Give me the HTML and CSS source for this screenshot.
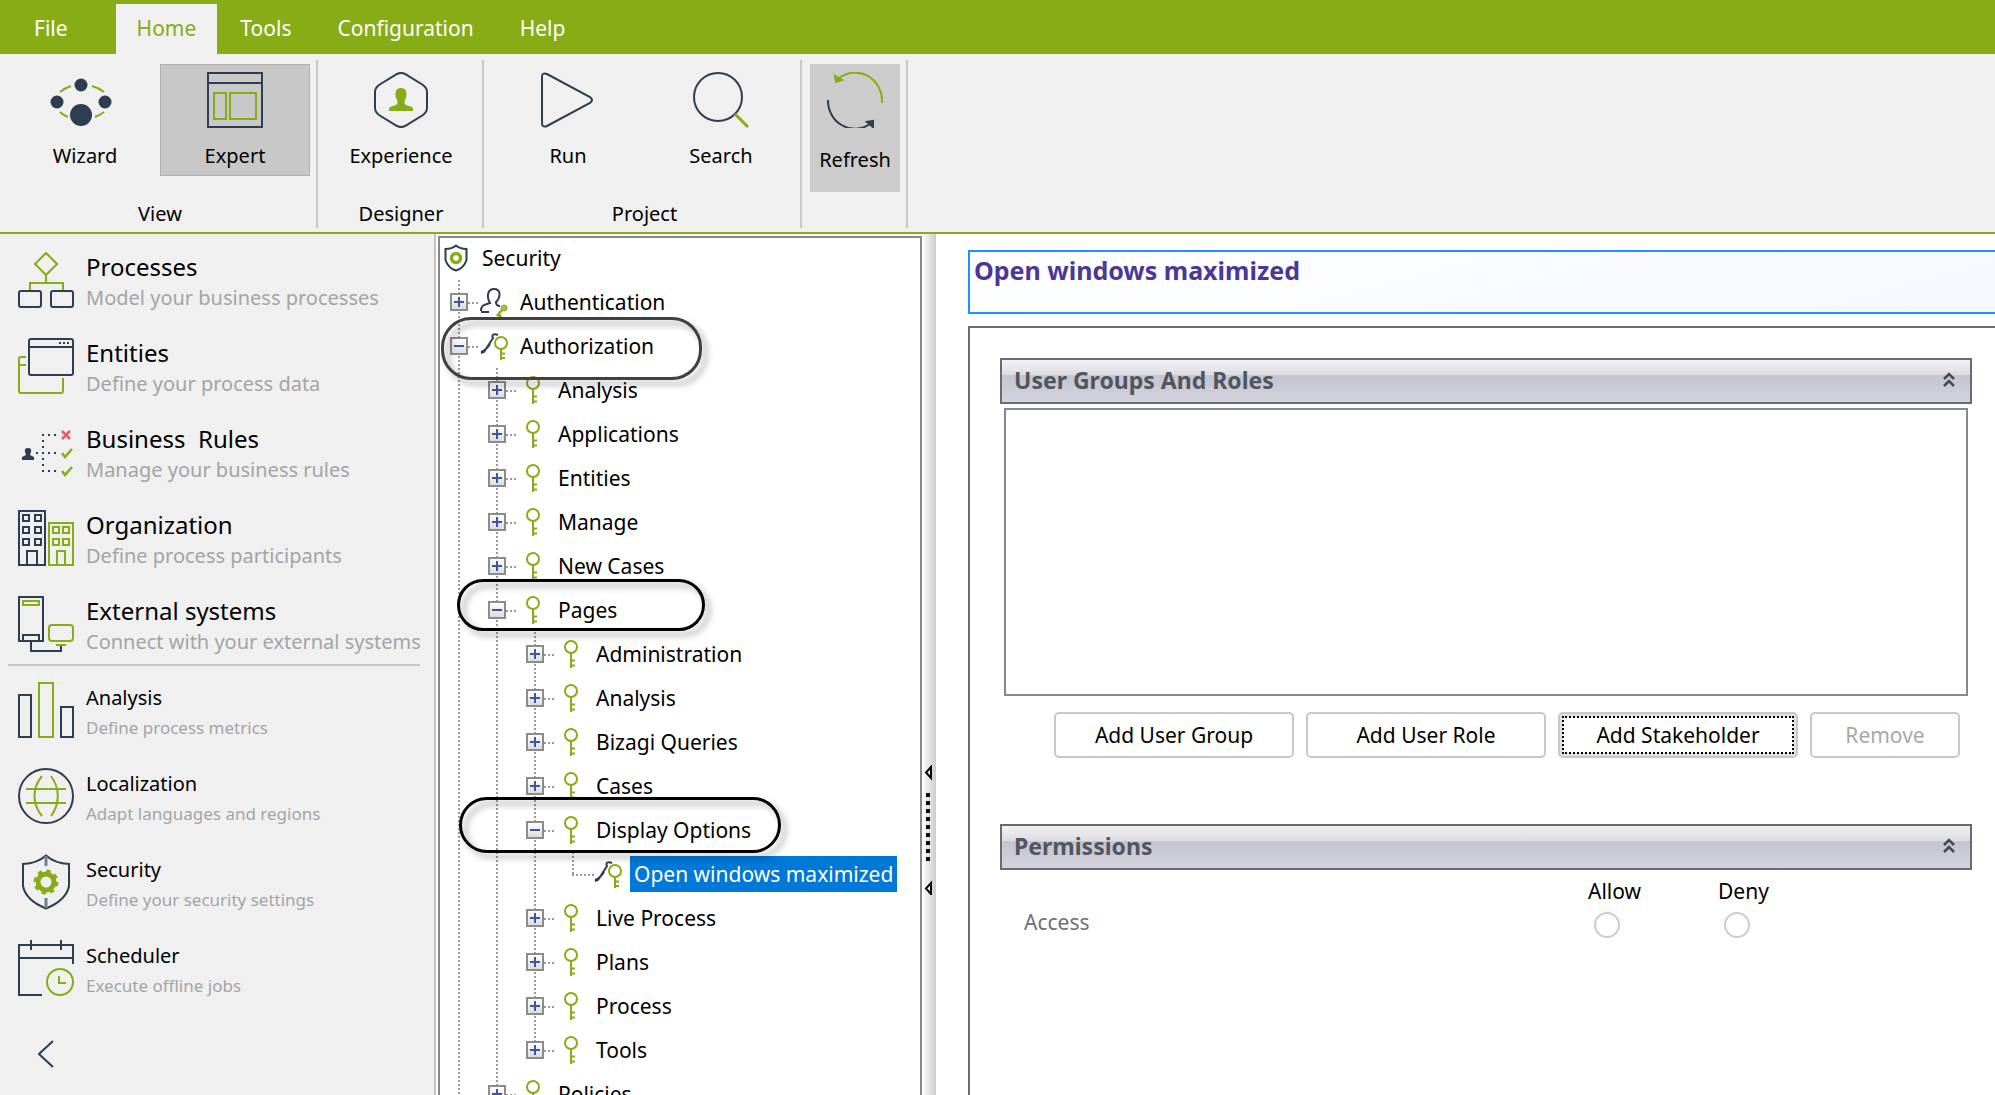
FILE: index.html
```html
<!DOCTYPE html>
<html lang="en">
<head>
<meta charset="utf-8">
<title>Security - Open windows maximized</title>
<link rel="stylesheet" href="styles.css">
</head>
<body>
<svg class="defs" aria-hidden="true">
  <symbol id="key" viewBox="0 0 28 28"><g fill="none" stroke="#87ac16" stroke-width="2"><circle cx="15" cy="7" r="6"/><path d="M15 13v15M16 20.500h3M16 25.500h3"/></g></symbol>
  <symbol id="keys" viewBox="0 0 28 28"><path d="M1 21L4 20L13 6C11 3 14 1 18 3M1 20C4 19 7 17 10 12" fill="none" stroke="#2c3e50" stroke-width="2"/><g fill="none" stroke="#87ac16" stroke-width="2"><circle cx="21" cy="11" r="6"/><path d="M21 17v11M22 21.500h3M22 26h3"/></g></symbol>
  <symbol id="shield" viewBox="0 0 56 56"><path d="M28 1.500C22 7 14 9.500 5 10V32C7 43 17 50 28 54.500C39 50 49 43 51 32V10C42 9.500 34 7 28 1.500Z" fill="none" stroke="#2c3e50" stroke-width="2"/><path d="M28 2v10M28 44v10" stroke="#75808c" stroke-width="3"/><circle cx="28" cy="28" r="8" fill="none" stroke="#87ac16" stroke-width="5"/><circle cx="28" cy="28" r="11" fill="none" stroke="#87ac16" stroke-width="3" stroke-dasharray="4.320 4.320"/></symbol>
</svg>

<header>
  <nav class="tabs">
    <a href="#" class="file">File</a>
    <a href="#" class="active">Home</a>
    <a href="#">Tools</a>
    <a href="#">Configuration</a>
    <a href="#">Help</a>
  </nav>
  <div class="ribbon">
    <section class="group view">
      <div class="tools">
        <button class="tool" type="button">
          <svg viewBox="0 0 70 56" width="70" height="56"><path d="M10 20Q15 16 21 14M42 14Q49 16 54 20M10 40Q13 43 18 45M45 45Q50 43 54 40" fill="none" stroke="#87ac16" stroke-width="2"/><g fill="#2c3e50"><circle cx="31" cy="13" r="6.500"/><circle cx="7" cy="30" r="6.500"/><circle cx="55" cy="30" r="6.500"/><circle cx="31" cy="43" r="11"/></g></svg>
          <span>Wizard</span>
        </button>
        <button class="tool selected" type="button">
          <svg viewBox="0 0 56 56" width="56" height="56" fill="none" stroke-width="2"><path d="M1 1h54v54H1zM1 11h54" stroke="#2c3e50"/><path d="M7 21h12v26H7zM23 21h26v26H23z" stroke="#87ac16"/></svg>
          <span>Expert</span>
        </button>
      </div>
      <h2>View</h2>
    </section>
    <section class="group designer">
      <div class="tools">
        <button class="tool" type="button">
          <svg viewBox="0 0 56 56" width="56" height="56"><path d="M24 2Q28 0 32 2L50 13Q54 16 54 20V36Q54 40 50 43L32 54Q28 56 24 54L6 43Q2 40 2 36V20Q2 16 6 13Z" fill="none" stroke="#2c3e50" stroke-width="2"/><path d="M28 16C34 16 34 22 33 26C31 29 31 32 33 33L39 35Q41 37 40 39H16Q15 37 17 35L23 33C25 32 25 29 23 26C22 22 22 16 28 16Z" fill="#87ac16"/></svg>
          <span>Experience</span>
        </button>
      </div>
      <h2>Designer</h2>
    </section>
    <section class="group project">
      <div class="tools">
        <button class="tool" type="button">
          <svg viewBox="0 0 56 56" width="56" height="56"><path d="M2 5Q2 0 7 2L50 25Q54 28 50 31L7 54Q2 56 2 51Z" fill="none" stroke="#2c3e50" stroke-width="2"/></svg>
          <span>Run</span>
        </button>
        <button class="tool" type="button">
          <svg viewBox="0 0 56 56" width="56" height="56" fill="none" stroke-width="2"><circle cx="25" cy="25" r="24" stroke="#2c3e50"/><path d="M42 42L55 55" stroke="#87ac16" stroke-width="3"/></svg>
          <span>Search</span>
        </button>
      </div>
      <h2>Project</h2>
    </section>
    <section class="group refresh">
      <button class="tool wide" type="button">
        <svg viewBox="0 0 56 56" width="56" height="56" fill="none" stroke-width="2"><g stroke="#87ac16"><path d="M55 31A27 28 0 0 0 11 7"/><path d="M8 4L9 10L15 8Z" fill="#87ac16"/></g><g stroke="#2c3e50"><path d="M1 28A27 28 0 0 0 43 52"/><path d="M46 55L46 49L40 50Z" fill="#2c3e50"/></g></svg>
        <span>Refresh</span>
      </button>
    </section>
  </div>
</header>

<div class="workspace">
  <aside class="sidebar">
    <nav>
      <a href="#" class="module">
        <svg viewBox="0 0 56 56" width="56" height="56" fill="none" stroke-width="2"><path d="M28 1L39 12L28 23L17 12ZM28 23v8M12 38v-7h33v7" stroke="#87ac16"/><g stroke="#2c3e50"><rect x="1" y="39" width="22" height="16" rx="2"/><rect x="33" y="39" width="22" height="16" rx="2"/></g></svg>
        <span class="text"><span class="name">Processes</span><span class="hint">Model your business processes</span></span>
      </a>
      <a href="#" class="module">
        <svg viewBox="0 0 56 56" width="56" height="56" fill="none" stroke-width="2"><g stroke="#87ac16"><path d="M8 19H3Q1 19 1 21V53Q1 55 3 55H43Q45 55 45 53V40M1 27h7"/></g><g stroke="#2c3e50"><rect x="11" y="1" width="44" height="36" rx="2"/><path d="M11 9h44M41 5h2M45 5h2M49 5h2"/></g></svg>
        <span class="text"><span class="name">Entities</span><span class="hint">Define your process data</span></span>
      </a>
      <a href="#" class="module">
        <svg viewBox="0 0 56 56" width="56" height="56" fill="none" stroke-width="2"><g stroke="#2c3e50" stroke-dasharray="2 4"><path d="M24 11h16M24 29h16M24 47h16M25 10v38M18 29h6"/></g><path d="M10 24Q14 24 13 28L12 31L16 33V36H4V33L8 31L7 28Q6 24 10 24Z" fill="#2c3e50"/><path d="M44 7l8 8M52 7l-8 8" stroke="#e85a6a" stroke-width="2.500"/><path d="M44 29l3 4l7-8M44 47l3 4l7-8" stroke="#87ac16" stroke-width="2.500"/></svg>
        <span class="text"><span class="name">Business&nbsp; Rules</span><span class="hint">Manage your business rules</span></span>
      </a>
      <a href="#" class="module">
        <svg viewBox="0 0 56 56" width="56" height="56" fill="none" stroke-width="2"><path d="M1 1h26v54H1zM5 5h6v6H5zM17 5h6v6h-6zM5 17h6v6H5zM17 17h6v6h-6zM5 29h6v6H5zM17 29h6v6h-6zM9 55V41h10v14" stroke="#2c3e50"/><path d="M31 13h24v42H31zM35 17h6v6h-6zM45 17h6v6h-6zM35 29h6v6h-6zM45 29h6v6h-6zM39 55V41h8v14" stroke="#87ac16"/></svg>
        <span class="text"><span class="name">Organization</span><span class="hint">Define process participants</span></span>
      </a>
      <a href="#" class="module">
        <svg viewBox="0 0 56 56" width="56" height="56" fill="none" stroke-width="2"><path d="M1 1h24v44H1zM5 45v-6h16v6M13 45v10h30v-6" stroke="#2c3e50"/><g stroke="#87ac16"><path d="M5 5h16v4H5zM38 49h10"/><rect x="31" y="29" width="24" height="16" rx="3"/></g></svg>
        <span class="text"><span class="name">External systems</span><span class="hint">Connect with your external systems</span></span>
      </a>
    </nav>
    <hr>
    <nav class="minor">
      <a href="#" class="module">
        <svg viewBox="0 0 56 56" width="56" height="56" fill="none" stroke-width="2"><path d="M1 13h12v42H1zM43 25h12v30H43z" stroke="#2c3e50"/><path d="M21 1h14v54H21z" stroke="#87ac16"/></svg>
        <span class="text"><span class="name">Analysis</span><span class="hint">Define process metrics</span></span>
      </a>
      <a href="#" class="module">
        <svg viewBox="0 0 56 56" width="56" height="56" fill="none" stroke-width="2"><circle cx="28" cy="28" r="27" stroke="#2c3e50"/><path d="M8 21h40M8 35h40M24 8C14 20 14 36 24 48M33 8C42 20 42 36 33 48" stroke="#87ac16"/></svg>
        <span class="text"><span class="name">Localization</span><span class="hint">Adapt languages and regions</span></span>
      </a>
      <a href="#" class="module">
        <svg width="56" height="56"><use href="#shield"/></svg>
        <span class="text"><span class="name">Security</span><span class="hint">Define your security settings</span></span>
      </a>
      <a href="#" class="module">
        <svg viewBox="0 0 56 56" width="56" height="56" fill="none" stroke-width="2"><path d="M24 55H1V5H55V24M1 18h54M13 0v10M43 0v10" stroke="#2c3e50"/><g stroke="#87ac16"><circle cx="42" cy="42" r="13"/><path d="M41 36v7h7"/></g></svg>
        <span class="text"><span class="name">Scheduler</span><span class="hint">Execute offline jobs</span></span>
      </a>
    </nav>
    <button class="collapse" type="button" aria-label="Collapse"><svg viewBox="0 0 16 28" width="16" height="28"><path d="M15 1L1 14L15 27" fill="none" stroke="#2c3e50" stroke-width="2"/></svg></button>
  </aside>

  <div class="tree">
    <div class="row root"><svg viewBox="0 0 24 28" width="24" height="28" fill="none"><path d="M12 1.500C9 4 5 5 1.500 5V16C3 21 7 25 12 26.500C17 25 21 21 22.500 16V5C19 5 15 4 12 1.500Z" stroke="#2c3e50" stroke-width="2"/><circle cx="12" cy="14" r="4.500" stroke="#87ac16" stroke-width="3.500"/></svg><span class="label">Security</span></div>
    <ul class="open">
      <li><div class="row"><button class="toggle plus" type="button" aria-label="Expand"></button><svg viewBox="0 0 28 28" width="28" height="28"><path d="M1 24h8M1 23C1 17 4 17 10 15C6 8 8 1 14 1C21 1 21 9 16 14C16 17 18 18 20 18" fill="none" stroke="#2c3e50" stroke-width="2"/><circle cx="24" cy="20" r="3" fill="#a3c244" stroke="#87ac16"/><path d="M22 22L17 28M19 27l2 2" stroke="#87ac16" stroke-width="2.500"/></svg><span class="label">Authentication</span></div></li>
      <li><div class="row"><button class="toggle" type="button" aria-label="Collapse"></button><svg width="28" height="28"><use href="#keys"/></svg><span class="label">Authorization</span></div>
        <ul class="open">
          <li><div class="row"><button class="toggle plus" type="button" aria-label="Expand"></button><svg width="28" height="28"><use href="#key"/></svg><span class="label">Analysis</span></div></li>
          <li><div class="row"><button class="toggle plus" type="button" aria-label="Expand"></button><svg width="28" height="28"><use href="#key"/></svg><span class="label">Applications</span></div></li>
          <li><div class="row"><button class="toggle plus" type="button" aria-label="Expand"></button><svg width="28" height="28"><use href="#key"/></svg><span class="label">Entities</span></div></li>
          <li><div class="row"><button class="toggle plus" type="button" aria-label="Expand"></button><svg width="28" height="28"><use href="#key"/></svg><span class="label">Manage</span></div></li>
          <li><div class="row"><button class="toggle plus" type="button" aria-label="Expand"></button><svg width="28" height="28"><use href="#key"/></svg><span class="label">New Cases</span></div></li>
          <li><div class="row"><button class="toggle" type="button" aria-label="Collapse"></button><svg width="28" height="28"><use href="#key"/></svg><span class="label">Pages</span></div>
            <ul>
              <li><div class="row"><button class="toggle plus" type="button" aria-label="Expand"></button><svg width="28" height="28"><use href="#key"/></svg><span class="label">Administration</span></div></li>
              <li><div class="row"><button class="toggle plus" type="button" aria-label="Expand"></button><svg width="28" height="28"><use href="#key"/></svg><span class="label">Analysis</span></div></li>
              <li><div class="row"><button class="toggle plus" type="button" aria-label="Expand"></button><svg width="28" height="28"><use href="#key"/></svg><span class="label">Bizagi Queries</span></div></li>
              <li><div class="row"><button class="toggle plus" type="button" aria-label="Expand"></button><svg width="28" height="28"><use href="#key"/></svg><span class="label">Cases</span></div></li>
              <li><div class="row"><button class="toggle" type="button" aria-label="Collapse"></button><svg width="28" height="28"><use href="#key"/></svg><span class="label">Display Options</span></div>
                <ul>
                  <li><div class="row leaf"><svg width="28" height="28"><use href="#keys"/></svg><span class="label current">Open windows maximized</span></div></li>
                </ul>
              </li>
              <li><div class="row"><button class="toggle plus" type="button" aria-label="Expand"></button><svg width="28" height="28"><use href="#key"/></svg><span class="label">Live Process</span></div></li>
              <li><div class="row"><button class="toggle plus" type="button" aria-label="Expand"></button><svg width="28" height="28"><use href="#key"/></svg><span class="label">Plans</span></div></li>
              <li><div class="row"><button class="toggle plus" type="button" aria-label="Expand"></button><svg width="28" height="28"><use href="#key"/></svg><span class="label">Process</span></div></li>
              <li><div class="row"><button class="toggle plus" type="button" aria-label="Expand"></button><svg width="28" height="28"><use href="#key"/></svg><span class="label">Tools</span></div></li>
            </ul>
          </li>
          <li><div class="row"><button class="toggle plus" type="button" aria-label="Expand"></button><svg width="28" height="28"><use href="#key"/></svg><span class="label">Policies</span></div></li>
        </ul>
      </li>
    </ul>
  </div>

  <div class="splitter">
    <svg viewBox="0 0 12 130" width="12" height="130"><path d="M7 2v11L2 7.500zM7 118v11L2 123.500z" fill="#fff" stroke="#000" stroke-width="2"/><path d="M4 28v68" stroke="#000" stroke-width="4" stroke-dasharray="4 4"/></svg>
  </div>

  <main>
    <h1>Open windows maximized</h1>
    <div class="panel">
      <section>
        <h3>User Groups And Roles <svg viewBox="0 0 12 16" width="12" height="16"><path d="M1 7l5-5l5 5M1 14l5-5l5 5" fill="none" stroke="#44484f" stroke-width="2.500"/></svg></h3>
        <div class="list"></div>
        <div class="actions">
          <button type="button">Add User Group</button>
          <button type="button">Add User Role</button>
          <button type="button" class="focused">Add Stakeholder</button>
          <button type="button" class="short" disabled>Remove</button>
        </div>
      </section>
      <section>
        <h3>Permissions <svg viewBox="0 0 12 16" width="12" height="16"><path d="M1 7l5-5l5 5M1 14l5-5l5 5" fill="none" stroke="#44484f" stroke-width="2.500"/></svg></h3>
        <table>
          <thead><tr><td></td><th scope="col">Allow</th><th scope="col">Deny</th><td class="rest"></td></tr></thead>
          <tbody><tr><th scope="row" class="perm">Access</th><td><input type="radio" name="access" aria-label="Allow access"></td><td><input type="radio" name="access" aria-label="Deny access"></td><td></td></tr></tbody>
        </table>
      </section>
    </div>
  </main>
</div>

<div class="mark mark-authorization"></div>
<div class="mark mark-pages"></div>
<div class="mark mark-display"></div>
</body>
</html>
```
FILE: styles.css
```css
* { box-sizing: border-box; }

body {
  margin: 0;
  height: 100vh;
  overflow: hidden;
  display: flex;
  flex-direction: column;
  background: #fff;
  color: #000;
  font: 21px/28px "Noto Sans", "Open Sans", sans-serif;
}

.defs { position: absolute; width: 0; height: 0; }
svg { display: block; flex: none; }
a { color: inherit; text-decoration: none; }
button { font: inherit; color: inherit; margin: 0; padding: 0; background: none; border: 0; }
h1, h2, h3, ul { margin: 0; padding: 0; }

/* Menu tabs */
header { flex: none; border-bottom: 2px solid #87ac16; }
.tabs {
  display: flex;
  align-items: flex-end;
  height: 54px;
  background: #87ac16;
  color: #fff;
}
.tabs a { height: 50px; padding: 10px 23px 0; }
.tabs .file { padding: 10px 48px 0 34px; }
.tabs .active { padding: 10px 21px 0; background: #f0f0f0; color: #87ac16; }

/* Ribbon */
.ribbon {
  display: flex;
  padding: 6px 0 4px;
  background: #f0f0f0;
  font-size: 20px;
}
.group {
  display: flex;
  flex-direction: column;
  justify-content: space-between;
  height: 168px;
  padding: 4px 6px 0;
  border-right: 2px solid #c8c8c8;
}
.view { padding-left: 10px; }
.group h2 { font-size: 20px; font-weight: 400; text-align: center; }
.tools { display: flex; }
.tool {
  display: flex;
  flex-direction: column;
  align-items: center;
  gap: 14px;
  width: 150px;
  height: 112px;
  padding-top: 7px;
  border: 1px solid transparent;
}
.selected { background: #c8c8c8; border-color: #b0b0b0; }
.designer { padding: 4px 6px 0 8px; }
.project { padding: 4px 4px 0 9px; }
.project .tools { gap: 3px; }
.refresh { padding: 4px 6px 0 8px; }
.wide { width: 90px; height: 128px; gap: 18px; background: #ccc; }

/* Module list */
.workspace { flex: 1; min-height: 0; display: flex; overflow: hidden; }
.sidebar {
  flex: none;
  width: 436px;
  padding-top: 4px;
  background: #f0f0f0;
  border-right: 2px solid #c4c4c8;
}
.module { display: flex; gap: 12px; height: 86px; padding: 14px 0 0 18px; }
.text { display: flex; flex-direction: column; white-space: nowrap; }
.name { font-size: 24px; line-height: 30px; }
.hint { font-size: 20px; line-height: 32px; color: #a4a4a6; }
.sidebar hr { height: 2px; margin: -4px 14px 0 8px; border: 0; background: #c4c4c4; }
.minor .module { padding-top: 16px; }
.minor .name { font-size: 20px; line-height: 32px; }
.minor .hint { font-size: 17px; line-height: 28px; }
.collapse { display: block; margin: 30px 0 0 38px; }

/* Security tree */
.tree {
  flex: none;
  width: 484px;
  margin: 2px 4px 0 2px;
  border: 2px solid #84888f;
  border-bottom: 0;
  overflow: hidden;
}
.tree ul {
  list-style: none;
  background: repeating-linear-gradient(#9a9a9a 0 2px, transparent 2px 4px) 18px 0 / 2px calc(100% - 22px) no-repeat;
}
.tree ul.open { background-size: 2px 100%; }
.tree ul ul { margin-left: 38px; }
.row { display: flex; align-items: center; gap: 8px; height: 44px; }
.row svg { overflow: visible; }
.root { height: 42px; padding: 0 0 2px 4px; gap: 10px; }
.toggle {
  flex: none;
  width: 18px;
  height: 18px;
  margin: 0 4px 0 10px;
  border: 2px solid #8c8c8c;
  background: linear-gradient(#3a56a5, #3a56a5) center / 10px 2px no-repeat, linear-gradient(#fff, #ddd);
}
.toggle.plus {
  background: linear-gradient(#3a56a5, #3a56a5) center / 10px 2px no-repeat,
    linear-gradient(#3a56a5, #3a56a5) center / 2px 10px no-repeat, linear-gradient(#fff, #ddd);
}
.row:not(.root) {
  background: repeating-linear-gradient(90deg, #9a9a9a 0 2px, transparent 2px 4px) 28px 22px / 10px 2px no-repeat;
}
.row.leaf { padding-left: 40px; background-position: 18px 22px; background-size: 22px 2px; }
.label { padding: 4px; white-space: nowrap; }
.current { background: #0078d7; color: #fff; }

/* Splitter */
.splitter {
  flex: none;
  display: flex;
  align-items: flex-end;
  width: 12px;
  margin-left: -2px;
  padding-bottom: 200px;
  background: linear-gradient(90deg, #f6f6f6, #ccc);
}

/* Details */
main {
  flex: 1;
  min-width: 0;
  display: flex;
  flex-direction: column;
  gap: 12px;
  padding: 16px 0 0 32px;
}
h1 {
  height: 64px;
  padding: 2px 4px;
  border: 2px solid #1e90ff;
  border-right: 0;
  background: linear-gradient(165deg, #fff, #f4f9ff);
  color: #4b3795;
  font-size: 25px;
  line-height: 32px;
}
.panel {
  flex: 1;
  display: flex;
  flex-direction: column;
  gap: 66px;
  padding: 30px 23px 0 30px;
  border: 2px solid #6b6d75;
  border-width: 2px 0 0 2px;
}
h3 {
  display: flex;
  align-items: center;
  justify-content: space-between;
  height: 46px;
  padding: 0 15px 2px 12px;
  border: 2px solid #6a6b72;
  background: linear-gradient(#f2f2f5, #dcdce2 36%, #c4c5d1 37%, #d2d3df);
  color: #50565e;
  font-size: 23px;
}
.list { height: 288px; margin: 4px; border: 2px solid #84888f; }
.actions {
  display: flex;
  justify-content: flex-end;
  gap: 12px;
  padding: 12px 12px 0 0;
}
.actions button {
  width: 240px;
  height: 46px;
  border: 2px solid #c8c8c8;
  border-radius: 5px;
  background: #fff;
}
.actions .short { width: 150px; color: #a8a8aa; }
.actions .focused { outline: 2px dotted #000; outline-offset: -6px; box-shadow: inset 0 0 0 3px #e2e2e2; }

table { width: 100%; border-collapse: collapse; table-layout: fixed; }
td, th { padding: 0; font-weight: 400; text-align: left; }
thead th { width: 130px; height: 36px; padding-top: 6px; }
.rest { width: 124px; }
tbody { line-height: 32px; }
.perm { padding-left: 24px; color: #707070; }
input[type="radio"] {
  appearance: none;
  display: block;
  width: 26px;
  height: 26px;
  margin: 6px 0 0 6px;
  border: 2px solid #ccc;
  border-radius: 50%;
  background: #fff;
}

/* Callout outlines drawn over the tree */
.mark {
  position: absolute;
  border: 3px solid #000;
  border-radius: 30px;
  filter: drop-shadow(5px 5px 3px rgba(0, 0, 0, 0.35));
  pointer-events: none;
}
.mark-authorization { left: 441px; top: 317px; width: 261px; height: 63px; border-color: #404040; }
.mark-pages { left: 457px; top: 579px; width: 248px; height: 52px; }
.mark-display { left: 459px; top: 797px; width: 322px; height: 56px; }
```
